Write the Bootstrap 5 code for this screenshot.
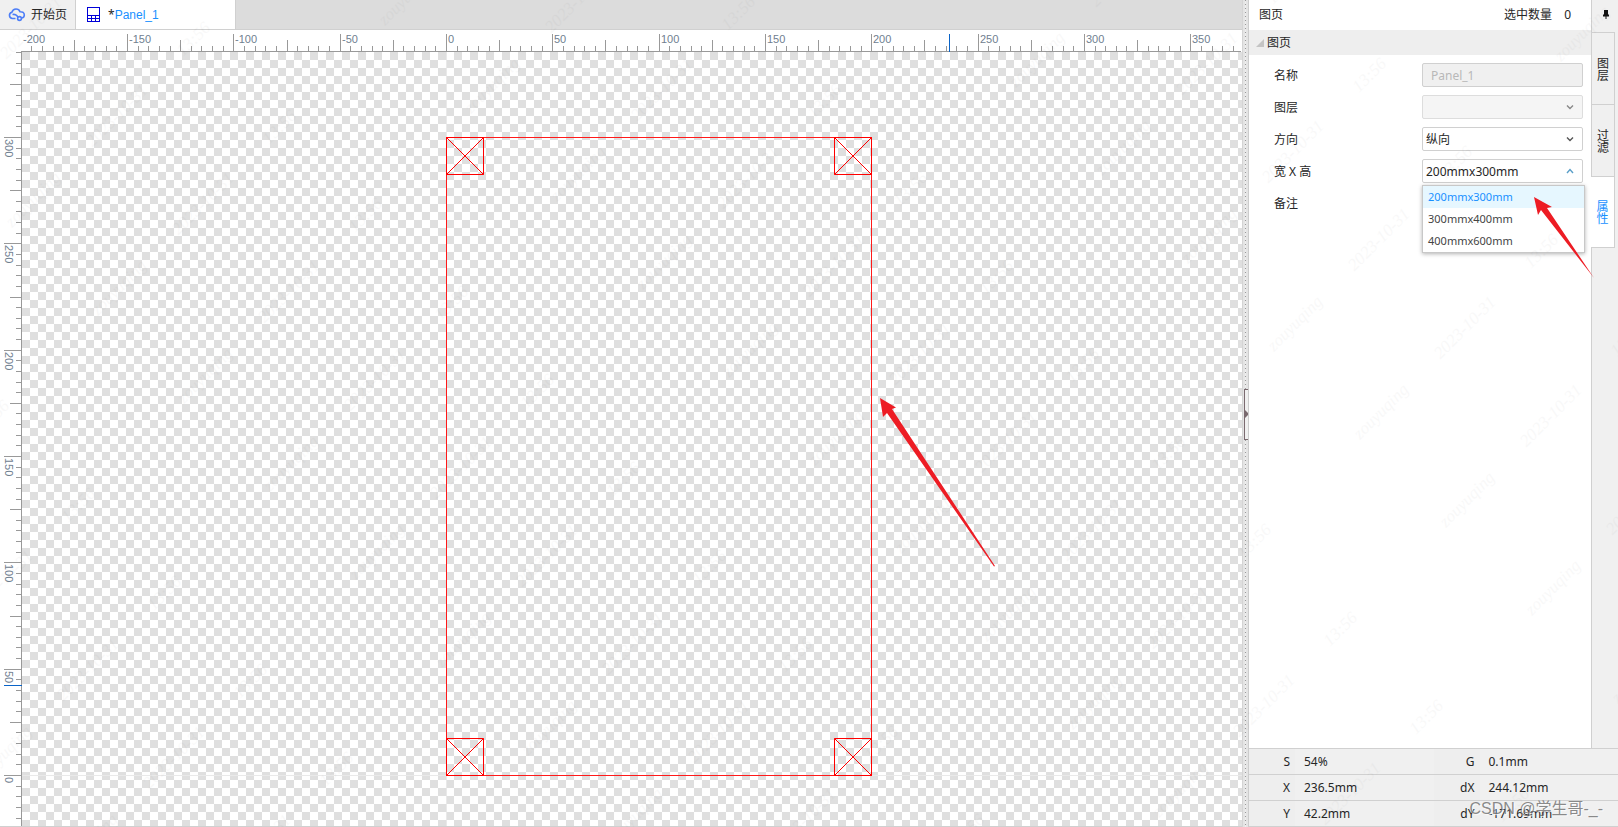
<!DOCTYPE html>
<html lang="zh-CN">
<head>
<meta charset="utf-8">
<meta name="viewport" content="width=device-width, initial-scale=1">
<title>Panel_1</title>
<link href="https://cdn.jsdelivr.net/npm/bootstrap@5.3.0/dist/css/bootstrap.min.css" rel="stylesheet">
<style>
  :root { --line: #d0d0d0; --accent: #1890ff; }
  body { font-family: "Noto Sans", "Noto Sans CJK SC", sans-serif; font-size: 12px; line-height: 18px; color: #262626; }

  .tab-strip { height: 30px; background: #dcdcdc; border-bottom: 1px solid var(--line); }
  .doc-tab { border: 0; border-right: 1px solid var(--line); background: #f0f0f0; color: #262626; padding: 0; }
  .doc-start { width: 76px; padding-left: 8px; gap: 5px; }
  .doc-panel { width: 160px; padding-left: 11px; gap: 7px; background: #fff; }
  .doc-panel .doc-name { color: var(--accent); font-family: "Liberation Sans", sans-serif; }

  .stage { background: #fff; border-bottom: 1px solid var(--line); }
  .stage svg { width: 100%; height: 100%; display: block; }
  .ruler-num { font: 11px "Liberation Sans", sans-serif; fill: #708090; }

  .splitter { width: 7px; background: #e4e4e4; border-left: 1px solid #d4d4d4; border-right: 1px solid #ccc; }
  .splitter-dots { width: 1px; margin-left: 2px; background: repeating-linear-gradient(#999 0 1px, #eee 1px 4px); }
  .splitter-grip { left: 1px; top: 47%; width: 4px; height: 51px; border: 1px solid #7a6a6f; border-right: 0; background: #f0f0f0; padding: 0; }
  .splitter-grip svg { display: block; }

  .side { width: 369px; }
  .side-title { height: 30px; padding: 0 20px 0 10px; }
  .section-head { height: 25px; background: #eee; border: 0; padding: 0 0 0 7px; gap: 3px; color: #262626; }
  .prop-list { padding: 8px 8px 0 25px; }
  .prop-row { height: 24px; margin-bottom: 8px; }
  .prop-row > label, .prop-row > span { padding-top: 2px; }
  .prop-field { width: 161px; }
  .prop-field .form-control, .prop-field .form-select {
    height: 24px; min-height: 24px; padding: 1px 24px 0 3px; font-size: 12px; line-height: 21px;
    color: #262626; border: 1px solid var(--line); border-radius: 2px; background-color: #fff; box-shadow: none;
  }
  .prop-field .form-control:disabled { background: #f0f0f0; color: #b8b8b8; padding-left: 8px; opacity: 1; }
  .prop-field .form-select:disabled { background-color: #f5f5f5; border-color: #ddd; }
  .form-select { background-image: none; }
  .chev { right: 9px; top: 9px; pointer-events: none; }
  .size-menu { top: 26px; left: 0; width: 163px; background: #fff; border: 1px solid #c8c8c8; box-shadow: 0 1px 4px rgba(0,0,0,.3); z-index: 3; }
  .size-menu li { height: 22px; line-height: 21px; padding-left: 5px; font-size: 11px; color: #444; }
  .size-menu li.chosen { background: #e6f7ff; color: var(--accent); }
  .pointer-arrow { left: 109px; top: 37px; z-index: 4; pointer-events: none; }

  .rail { width: 27px; background: #f0f0f0; border-left: 1px solid var(--line); }
  .rail-pin { height: 32px; border: 0; background: transparent; padding: 0 0 3px 2px; }
  .rail-tab { width: 23px; height: 72px; border: 1px solid var(--line); border-left: 0; border-bottom: 0; background: #f0f0f0; color: #262626; padding: 0; line-height: 12px; font-family: "Noto Sans CJK SC", sans-serif; }
  .rail-tab span { width: 12px; }
  .rail-tab.picked { background: #fff; color: var(--accent); border-bottom: 1px solid var(--line); margin-left: -1px; width: 24px; }

  .readout { display: grid; grid-template-columns: 46px 1fr 46px 1fr; }
  .readout > * { height: 26px; line-height: 25px; margin: 0; font-weight: 400; border-top: 1px solid var(--line); background: #f0f0f0; }
  .readout dt { text-align: right; padding-right: 5px; background: #eee; }
  .readout dd { padding-left: 9px; }
  .readout-wrap { border-bottom: 1px solid var(--line); }

  .stamp-layer { pointer-events: none; z-index: 6; opacity: .025; }
  .stamp-layer text { font: italic 17px "Liberation Serif", serif; white-space: pre; }
  .credit { right: 15px; bottom: 6px; z-index: 7; font: 16px/24px "Liberation Sans", "Noto Sans CJK SC", sans-serif; color: rgba(90,90,90,.7); text-shadow: 1px 1px 1px rgba(255,255,255,.8); pointer-events: none; }
</style>
</head>
<body class="vh-100 overflow-hidden position-relative">
<div class="d-flex h-100">
  <main class="d-flex flex-column flex-grow-1 min-w-0">
    <nav class="tab-strip d-flex flex-shrink-0">
      <button type="button" class="doc-tab doc-start d-flex align-items-center">
        <svg width="18" height="14" viewBox="0 0 18 14" fill="none" stroke="#4d7ef7" stroke-width="1.6"><path d="M7.500 10.500H4.500a3.200 3.200 0 0 1-.6-6.300C4.500 2 6.300 1 8 1c2 0 3.400 1 4 2.700 2.500-.2 4.300 1.200 4.300 3.300 0 1.700-1.100 2.700-2.300 3.100"/><path d="M4.500 6.500c2-.4 3.400 0 4.400 1.200l1.300 1.500"/><circle cx="11.500" cy="10.500" r="1.900"/></svg>
        <span>开始页</span>
      </button>
      <button type="button" class="doc-tab doc-panel d-flex align-items-center">
        <svg width="14" height="16" viewBox="0 0 14 16" fill="none" stroke="#0000d8" shape-rendering="crispEdges"><path d="M.5.500h12v14H.500zM.5 8.500h12M.5 11.500h12M4.500 8.500v6M8.500 8.500v6"/></svg>
        <span>*<span class="doc-name">Panel_1</span></span>
      </button>
    </nav>
    <div class="stage flex-grow-1 overflow-hidden"><svg id="board" role="img" aria-label="Panel_1"></svg></div>
  </main>

  <div class="splitter d-flex flex-shrink-0 position-relative">
    <div class="splitter-dots"></div>
    <button type="button" class="splitter-grip position-absolute d-flex align-items-center" aria-label="折叠"><svg width="4" height="8"><path d="M0 0l4 4-4 4z" fill="#7a6a6f"/></svg></button>
  </div>

  <aside class="side d-flex flex-column flex-shrink-0 bg-white">
    <div class="d-flex flex-grow-1">
      <section class="flex-grow-1">
        <div class="side-title d-flex align-items-center">
          <span class="me-auto">图页</span><span>选中数量</span><span class="ms-2 ps-1 text-start">0</span>
        </div>
        <button type="button" class="section-head w-100 d-flex align-items-center">
          <svg width="8" height="8"><path d="M8 0v8H0z" fill="#c4c4c4"/></svg>图页
        </button>
        <form class="prop-list">
          <div class="prop-row d-flex align-items-center justify-content-between">
            <label for="f-name">名称</label>
            <div class="prop-field"><input id="f-name" class="form-control" value="Panel_1" disabled></div>
          </div>
          <div class="prop-row d-flex align-items-center justify-content-between">
            <label for="f-layer">图层</label>
            <div class="prop-field position-relative">
              <select id="f-layer" class="form-select" disabled><option></option></select>
              <svg class="chev position-absolute" width="8" height="6" fill="none" stroke="#888" stroke-width="1.400"><path d="M1 1.500l3 3 3-3"/></svg>
            </div>
          </div>
          <div class="prop-row d-flex align-items-center justify-content-between">
            <label for="f-dir">方向</label>
            <div class="prop-field position-relative">
              <select id="f-dir" class="form-select"><option>纵向</option><option>横向</option></select>
              <svg class="chev position-absolute" width="8" height="6" fill="none" stroke="#555" stroke-width="1.400"><path d="M1 1.500l3 3 3-3"/></svg>
            </div>
          </div>
          <div class="prop-row d-flex align-items-center justify-content-between">
            <label for="f-size">宽 X 高</label>
            <div class="prop-field position-relative">
              <select id="f-size" class="form-select"><option>200mmx300mm</option></select>
              <svg class="chev position-absolute" width="8" height="6" fill="none" stroke="#5a9fc8" stroke-width="1.400"><path d="M1 5l3-3.500L7 5"/></svg>
              <ul class="size-menu list-unstyled mb-0 position-absolute" role="listbox" aria-label="宽 X 高">
                <li class="chosen" role="option" aria-selected="true">200mmx300mm</li>
                <li role="option">300mmx400mm</li>
                <li role="option">400mmx600mm</li>
              </ul>
              <svg class="pointer-arrow position-absolute" width="64" height="84"><path d="M3 1l18 10-5 1 47 70L10 14l-3 5z" fill="#ed1c24"/></svg>
            </div>
          </div>
          <div class="prop-row d-flex align-items-center"><span>备注</span></div>
        </form>
      </section>
      <nav class="rail d-flex flex-column flex-shrink-0">
        <button type="button" class="rail-pin d-flex align-items-center justify-content-center" aria-label="固定">
          <svg width="8" height="10" viewBox="0 0 8 10"><path d="M2 0h4v4l1 1v1.500H4.500V9h-1V6.500H1V5l1-1z" fill="#111"/></svg>
        </button>
        <button type="button" class="rail-tab d-flex align-items-center justify-content-center"><span>图层</span></button>
        <button type="button" class="rail-tab d-flex align-items-center justify-content-center"><span>过滤</span></button>
        <button type="button" class="rail-tab picked d-flex align-items-center justify-content-center"><span>属性</span></button>
      </nav>
    </div>
    <div class="readout-wrap">
      <dl class="readout mb-0">
        <dt>S</dt><dd>54%</dd><dt>G</dt><dd>0.1mm</dd>
        <dt>X</dt><dd>236.5mm</dd><dt>dX</dt><dd>244.12mm</dd>
        <dt>Y</dt><dd>42.2mm</dd><dt>dY</dt><dd>-171.69mm</dd>
      </dl>
    </div>
  </aside>
</div>
<svg id="stamps" class="stamp-layer position-absolute top-0 start-0 w-100 h-100" aria-hidden="true"></svg>
<div class="credit position-absolute">CSDN @学生哥-_-</div>

<script src="https://cdn.jsdelivr.net/npm/bootstrap@5.3.0/dist/js/bootstrap.bundle.min.js"></script>
<script>
  const board = document.getElementById('board');
  const SCALE = 2.1265;            // pixels per millimetre at 54%
  const EDGE = 22;                 // ruler thickness

  function drawBoard() {
    const W = board.clientWidth, H = board.clientHeight;
    const ox = 446, oy = H - 51;   // sheet origin, lower left
    const px = mm => Math.round(ox + mm * SCALE), py = mm => Math.round(oy - mm * SCALE);
    const rect = (x, y, w, h, c) => `<rect x="${x}" y="${y}" width="${w}" height="${h}" fill="${c}"/>`;
    let s = `<defs><pattern id="chk" x="22" y="22" width="16" height="16" patternUnits="userSpaceOnUse"><path d="M0 0h8v8H0zM8 8h8v8H8z" fill="#dfdfdf"/></pattern></defs>`;
    s += rect(EDGE, EDGE, W - EDGE, H - EDGE, 'url(#chk)');
    s += rect(ox, EDGE, 1, H - EDGE, '#e9e9e9') + rect(EDGE, oy, W - EDGE, 1, '#e9e9e9');

    // rulers
    s += rect(21, 21, W - 22, 1, '#999') + rect(21, 21, 1, H - 21, '#999');
    for (let mm = -200; px(mm) < W - 1; mm += 5) {
      const len = mm % 50 === 0 ? 17 : mm % 25 === 0 ? 11 : 5;
      if (px(mm) > 22) s += rect(px(mm), 21 - len, 1, len, '#999');
      if (mm % 50 === 0) s += `<text class="ruler-num" x="${px(mm) + 2}" y="13">${mm}</text>`;
    }
    for (let mm = -20; py(mm) >= 21; mm += 5) {
      const len = mm % 50 === 0 ? 17 : mm % 25 === 0 ? 11 : 5;
      s += rect(21 - len, py(mm), len, 1, '#999');
      if (mm % 50 === 0) s += `<text class="ruler-num" transform="translate(5 ${py(mm) + 2}) rotate(90)">${mm}</text>`;
    }
    s += rect(px(236.5), 4, 1, 18, '#0a64c8') + rect(4, py(42.2), 18, 1, '#0a64c8');

    // sheet outline with its four fiducials
    const x0 = px(0), x1 = px(200), y0 = py(300), y1 = py(0);
    s += `<g fill="none" stroke="#ff1a1a"><rect x="${x0 + .5}" y="${y0 + .5}" width="${x1 - x0}" height="${y1 - y0}"/>`;
    for (const x of [x0, x1 - 37]) for (const y of [y0, y1 - 37])
      s += `<path stroke="#f00" d="M${x + .5} ${y + .5}h37v37h-37zl37 37m0-37l-37 37"/>`;
    s += '</g>';

    // annotation arrow
    s += '<path fill="#ed1c24" d="M880 368l16 9.500-4 1.500 103 157-1 .5L887 383l-4 4z"/>';
    board.innerHTML = s;
  }

  function drawStamps() {
    let s = '';
    for (let i = -22; i < 12; i++) for (let j = -6; j < 5; j++) {
      const x = 1274 + 86 * i + 287 * j, y = 352 + 88 * i - 290 * j;
      if (x < -250 || x > innerWidth || y < 0 || y > innerHeight + 250) continue;
      s += `<g transform="translate(${x} ${y}) rotate(-45)"><text>zouyuqing</text><text x="114">2023-10-31</text><text x="242">13:56</text></g>`;
    }
    document.getElementById('stamps').innerHTML = s;
  }
  function draw() { drawBoard(); drawStamps(); }
  draw();
  addEventListener('resize', draw);
</script>
</body>
</html>
